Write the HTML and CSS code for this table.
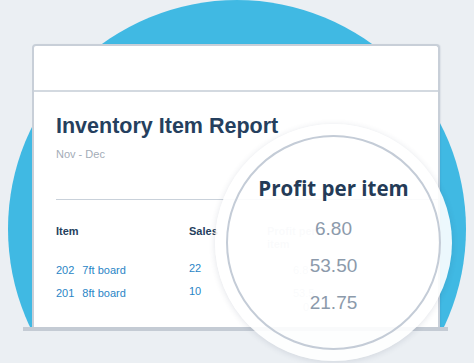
FILE: index.html
```html
<!DOCTYPE html>
<html>
<head>
<meta charset="utf-8">
<link rel="stylesheet" href="styles.css">
</head>
<body>
<div class="stage">
  <div class="scene">
    <div class="sun"></div>
    <div class="device">
      <div class="card">
        <div class="card-head"></div>
        <div class="card-body">
          <h1 class="title">Inventory Item Report</h1>
          <div class="period">Nov - Dec</div>
          <div class="rule"></div>
          <div class="table">
            <div class="th">Item</div>
            <div class="th">Sales</div>
            <div class="th th-faded">Profit per<br>item</div>

            <div class="td link"><span>202</span><span>7ft board</span></div>
            <div class="td link num">22</div>
            <div class="td faded val">6.8</div>

            <div class="td link"><span>201</span><span>8ft board</span></div>
            <div class="td link num">10</div>
            <div class="td faded val">53.5<br><span class="faded-extra">0</span></div>
          </div>
        </div>
      </div>
      <div class="base"></div>
    </div>
  </div>
  <div class="glass">
    <div class="ring">
      <div class="glass-title">Profit per item</div>
      <div class="glass-values">
        <div>6.80</div>
        <div>53.50</div>
        <div>21.75</div>
      </div>
    </div>
  </div>
</div>
</body>
</html>
```

FILE: styles.css
```css
* { box-sizing: border-box; }
html, body { margin: 0; padding: 0; }
body {
  background: #ebeff3;
  font-family: "Liberation Sans", Arial, sans-serif;
  overflow: hidden;
}
.stage {
  position: relative;
  width: 474px;
  height: 363px;
  overflow: hidden;
}
.scene {
  position: relative;
  height: 331px;
  overflow: hidden;
}
.sun {
  position: absolute;
  left: 8px;
  top: 0;
  width: 458px;
  height: 458px;
  border-radius: 50%;
  background: #40b9e3;
}
.device {
  position: relative;
  z-index: 1;
  display: flex;
  flex-direction: column;
  padding: 44px 0 0 23px;
}
.card {
  margin-left: 9px;
  width: 408px;
  height: 283px;
  background: #fff;
  border: 2px solid #c8cfd8;
  border-bottom: none;
  border-radius: 4px 4px 0 0;
  box-shadow: 1px 0 1px rgba(60, 80, 110, 0.08);
  display: flex;
  flex-direction: column;
}
.card-head {
  height: 46px;
  border-bottom: 2px solid #d3d9e0;
}
.card-body {
  padding: 21px 0 0 22px;
}
.title {
  margin: 0;
  font-size: 21.5px;
  line-height: 26px;
  font-weight: bold;
  color: #253f5e;
}
.period {
  margin-top: 8px;
  font-size: 11px;
  line-height: 14px;
  color: #a3acb7;
}
.rule {
  margin-top: 38px;
  height: 1px;
  background: #c9d1da;
}
.table {
  margin-top: 25px;
  display: grid;
  grid-template-columns: 133px 78px 1fr;
  row-gap: 9px;
  font-size: 11px;
}
.th {
  font-weight: bold;
  line-height: 13px;
  color: #253f5e;
}
.th-faded { color: #c6ced8; }
.table .th:nth-child(3) { margin-bottom: 3px; }
.td {
  line-height: 14px;
}
.link { color: #2a85c6; display: flex; gap: 8px; }
.num { margin-top: -2px; }
.faded { color: #c6ced8; }
.val { padding-left: 26px; }
.faded-extra { display: inline-block; margin-left: 10px; margin-top: -8px; }

.base {
  width: 425px;
  height: 4px;
  background: #c4cbd4;
}

.glass {
  position: absolute;
  z-index: 2;
  left: 215px;
  top: 124px;
  width: 237px;
  height: 237px;
  border-radius: 50%;
  background: rgba(255, 255, 255, 0.9);
  box-shadow: 0 1px 6px rgba(40, 60, 90, 0.14);
  padding: 11px;
}
.ring {
  width: 100%;
  height: 100%;
  border-radius: 50%;
  border: 2px solid #c4ccd7;
  display: flex;
  flex-direction: column;
  align-items: center;
  padding-top: 39px;
}
.glass-title {
  font-family: "Open Sans", "Liberation Sans", sans-serif;
  font-weight: bold;
  font-size: 20.5px;
  line-height: 24px;
  color: #243b57;
}
.glass-values {
  margin-top: 10px;
  font-size: 19px;
  line-height: 37px;
  color: #8c9aab;
  text-align: center;
}
```
